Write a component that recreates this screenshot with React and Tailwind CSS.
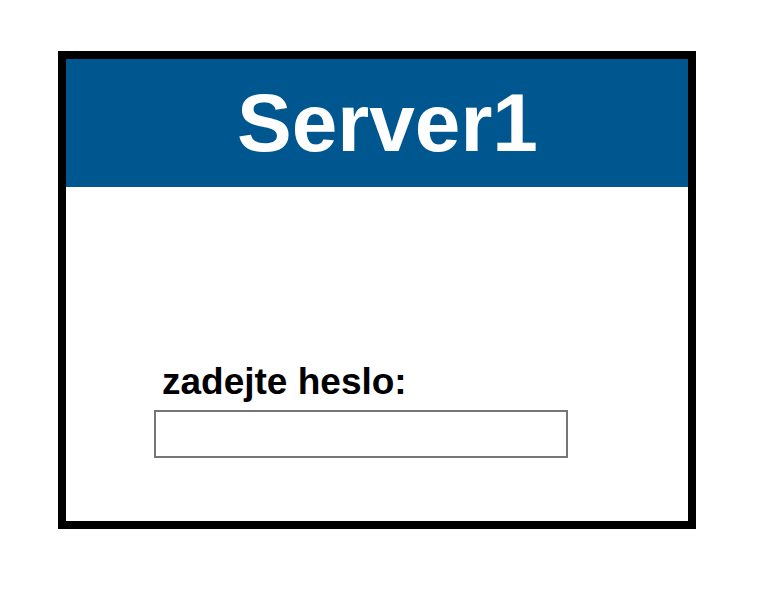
export default function App() {
  return (
    <div className="w-[765px] h-[599px] bg-white pt-[51px] pl-[58px]" style={{ fontFamily: '"Liberation Sans", Arial, sans-serif' }}>
      <div className="w-[638px] h-[478px] border-8 border-black flex flex-col">
        <div className="h-[128px] bg-[#00568f] text-white text-[82px] leading-[128px] font-bold text-center pl-[21px]">
          Server1
        </div>
        <div className="flex flex-col pl-[88px] pt-[175px]">
          <label className="text-[37px] leading-[40px] font-bold text-black pl-[8px]">zadejte heslo:</label>
          <input type="password" className="mt-[8px] w-[414px] h-[48px] border-2 border-[#767676] bg-white outline-none" />
        </div>
      </div>
    </div>
  );
}
